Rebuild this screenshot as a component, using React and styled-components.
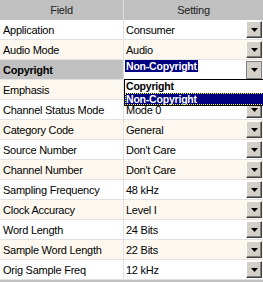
import styled, { createGlobalStyle } from "styled-components";

const GlobalStyle = createGlobalStyle`
  html, body {
    margin: 0;
    padding: 0;
  }
  body {
    width: 263px;
    height: 282px;
    overflow: hidden;
    background: #c0c0c0;
    font-family: "Liberation Sans", Arial, sans-serif;
    font-size: 11px;
    letter-spacing: -0.25px;
    color: #000;
  }
`

const Grid = styled.div`
  width: 263px;
  display: flex;
  flex-direction: column;
`

const Row = styled.div`
  display: grid;
  grid-template-columns: 124px 139px;
  height: 20px;
  background: ${(props) => (props.alt ? "#fdf8ef" : "#ffffff")};
`

const HeaderRow = styled(Row)`
  background: #c0c0c0;
`

const HeaderCell = styled.div`
  display: flex;
  align-items: center;
  justify-content: center;
  box-sizing: border-box;
  color: #222;
  border-right: ${(props) => (props.first ? "1px solid #dcdcdc" : "none")};
  padding-bottom: 1px;
`

const FieldCell = styled.div`
  display: flex;
  align-items: center;
  box-sizing: border-box;
  padding-left: 3px;
  white-space: nowrap;
  border-right: 1px solid #e2e2e2;
  border-bottom: 1px solid #e2e2e2;
  background: ${(props) => (props.selected ? "#c0c0c0" : "transparent")};
  font-weight: ${(props) => (props.selected ? "bold" : "normal")};
`

const SettingCell = styled.div`
  position: relative;
  display: flex;
  align-items: center;
  justify-content: space-between;
  box-sizing: border-box;
  padding-left: 2px;
  border-bottom: 1px solid #e2e2e2;
  white-space: nowrap;
`

const ComboCell = styled(SettingCell)`
  align-items: flex-start;
  padding-left: 1px;
  background: #fff;
  border-bottom: none;
`

const Selected = styled.span`
  background: #000080;
  color: #fff;
  font-weight: bold;
  font-size: 10.5px;
  letter-spacing: -0.2px;
  padding: 0 1px;
  height: 12px;
  line-height: 12px;
`

const DropButton = styled.div`
  align-self: stretch;
  width: 16px;
  margin: 1px 1px 1px 0;
  box-sizing: border-box;
  display: flex;
  align-items: center;
  justify-content: center;
  background: #d4d0c8;
  border: 1px solid;
  border-color: ${(props) =>
    props.pressed ? "#808080" : "#ffffff #404040 #404040 #ffffff"};
  box-shadow: ${(props) =>
    props.pressed ? "none" : "inset -1px -1px #808080"};
`

// open drop-down of the combo being edited; sits over the rows below
const List = styled.div`
  position: absolute;
  top: 19px;
  left: 0;
  right: -2px;
  z-index: 2;
  box-sizing: border-box;
  background: #fff;
  border: 1px solid #000;
  font-weight: bold;
  font-size: 10.5px;
  letter-spacing: -0.2px;
`

const ListItem = styled.div`
  height: 12.5px;
  line-height: 12.5px;
  box-sizing: border-box;
  padding-left: 1px;
  background: ${(props) => (props.active ? "#000080" : "transparent")};
  color: ${(props) => (props.active ? "#fff" : "#000")};
  outline: ${(props) => (props.active ? "1px dotted #ffff00" : "none")};
  outline-offset: -1px;
`

function Arrow() {
  return (
    <svg width="7" height="4" viewBox="0 0 7 4">
      <polygon points="0,0 7,0 3.5,4" fill="#000" />
    </svg>
  )
}

const rows = [
  ["Application", "Consumer"],
  ["Audio Mode", "Audio"],
  ["Copyright", "Non-Copyright"],
  ["Emphasis", ""],
  ["Channel Status Mode", "Mode 0"],
  ["Category Code", "General"],
  ["Source Number", "Don't Care"],
  ["Channel Number", "Don't Care"],
  ["Sampling Frequency", "48 kHz"],
  ["Clock Accuracy", "Level I"],
  ["Word Length", "24 Bits"],
  ["Sample Word Length", "22 Bits"],
  ["Orig Sample Freq", "12 kHz"],
]

export default function App() {
  return (
    <>
      <GlobalStyle />
      <Grid>
        <HeaderRow>
          <HeaderCell first>Field</HeaderCell>
          <HeaderCell>Setting</HeaderCell>
        </HeaderRow>
        {rows.map(([field, value], i) => {
          const editing = field === "Copyright"
          return (
            <Row key={field} alt={i % 2 === 1}>
              <FieldCell selected={editing}>{field}</FieldCell>
              {editing ? (
                <ComboCell>
                  <Selected>{value}</Selected>
                  <DropButton pressed>
                    <Arrow />
                  </DropButton>
                  <List>
                    <ListItem>Copyright</ListItem>
                    <ListItem active>Non-Copyright</ListItem>
                  </List>
                </ComboCell>
              ) : (
                <SettingCell>
                  <span>{value}</span>
                  <DropButton>
                    <Arrow />
                  </DropButton>
                </SettingCell>
              )}
            </Row>
          )
        })}
      </Grid>
    </>
  )
}
